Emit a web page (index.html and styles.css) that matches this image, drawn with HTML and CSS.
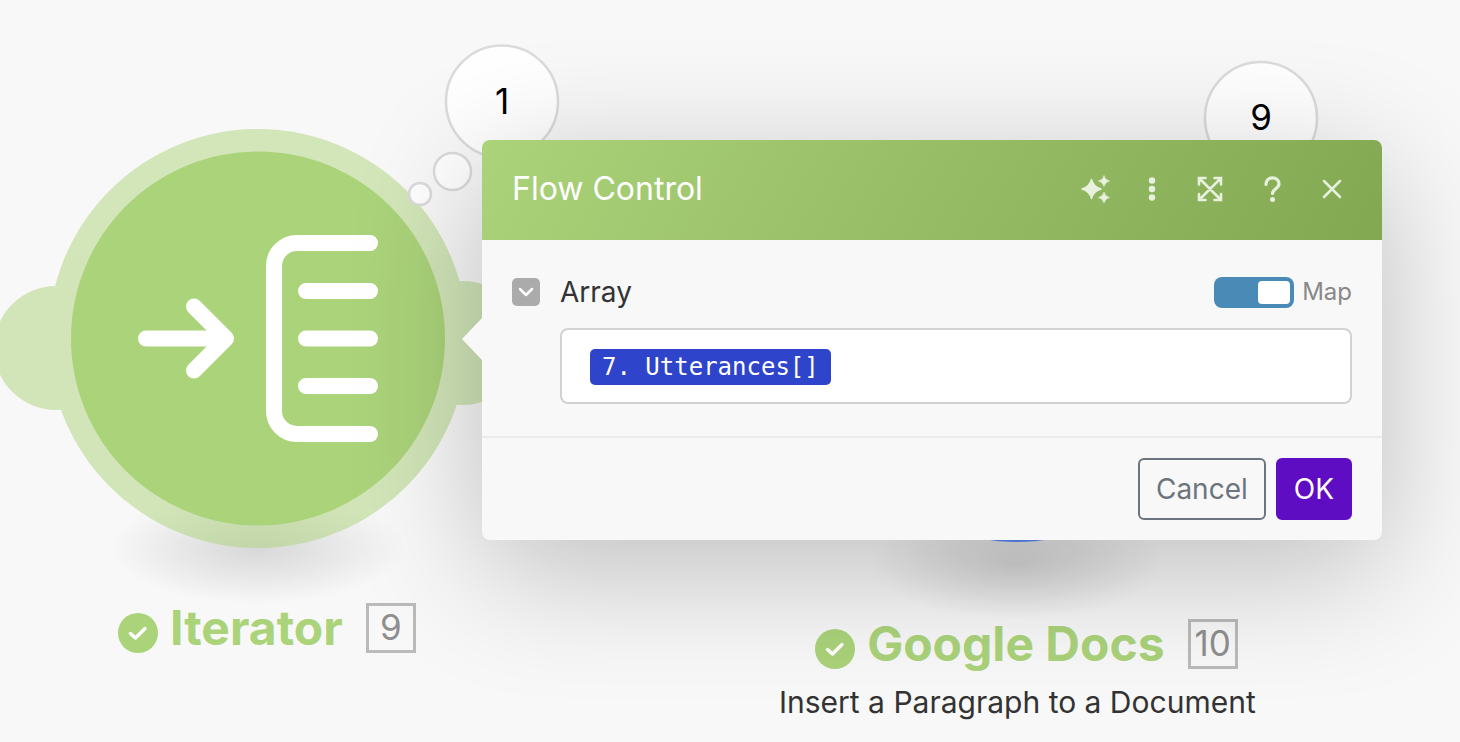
FILE: index.html
```html
<!DOCTYPE html>
<html lang="en">
<head>
<meta charset="utf-8">
<title>Flow Control</title>
<link rel="stylesheet" href="styles.css">
</head>
<body>
<main class="canvas">
  <svg class="art" width="1460" height="742" viewBox="0 0 1460 742" aria-hidden="true">
    <defs>
      <radialGradient id="ground">
        <stop offset="0" stop-color="#000" stop-opacity=".13"/>
        <stop offset=".5" stop-color="#000" stop-opacity=".07"/>
        <stop offset="1" stop-color="#000" stop-opacity="0"/>
      </radialGradient>
    </defs>
    <ellipse cx="258" cy="548" rx="148" ry="56" fill="url(#ground)"/>
    <g fill="#abd37a" opacity=".5">
      <circle cx="56" cy="348" r="62"/>
      <circle cx="463" cy="343" r="62"/>
      <circle cx="258" cy="338.500" r="209.500"/>
    </g>
    <circle cx="258" cy="338.500" r="187" fill="#abd37a"/>
    <g fill="none" stroke="#fff" stroke-width="16" stroke-linecap="round" stroke-linejoin="round">
      <path d="M146 338.500H226M194 306.500L226 338.500L194 370.500"/>
      <path d="M370 243H297a23 23 0 0 0-23 23V411a23 23 0 0 0 23 23H370"/>
      <path d="M306 291H370M306 338.500H370M306 386H370"/>
    </g>
    <ellipse cx="1017" cy="564" rx="148" ry="56" fill="url(#ground)"/>
    <circle cx="1017" cy="355" r="187" fill="#5a8bf5"/>
    <g fill="#fff" stroke="#dbdbdb" stroke-width="2.500">
      <circle cx="502" cy="101.500" r="56"/>
      <circle cx="452.500" cy="171.500" r="18.500"/>
      <circle cx="420" cy="194" r="11"/>
      <circle cx="1261" cy="118" r="56"/>
    </g>
  </svg>

  <span class="count count-iterator">1</span>
  <span class="count count-docs">9</span>

  <section class="node node-iterator">
    <div class="node-title">
      <svg class="check" viewBox="0 0 40 40" aria-hidden="true"><circle cx="20" cy="20" r="20"/><path d="M12.500 20.500L17.500 25L27 15.500"/></svg>
      <h2>Iterator</h2>
      <span class="badge">9</span>
    </div>
  </section>

  <section class="node node-docs">
    <div class="node-title">
      <svg class="check" viewBox="0 0 40 40" aria-hidden="true"><circle cx="20" cy="20" r="20"/><path d="M12.500 20.500L17.500 25L27 15.500"/></svg>
      <h2>Google Docs</h2>
      <span class="badge">10</span>
    </div>
    <p>Insert a Paragraph to a Document</p>
  </section>

  <form class="dialog" role="dialog" aria-labelledby="dialog-title">
    <header class="dialog-head">
      <h1 id="dialog-title">Flow Control</h1>
      <button type="button" class="tool" aria-label="Assistant">
        <svg viewBox="0 0 32 32"><g fill="currentColor"><path d="M15.500 6.500Q17.500 14 25 16Q17.500 18 15.500 25.500Q13.500 18 6 16Q13.500 14 15.500 6.500Z" stroke="currentColor" stroke-width="1.500" stroke-linejoin="round"/><path d="M28 2.500Q29 7 33.500 8Q29 9 28 13.500Q27 9 22.500 8Q27 7 28 2.500ZM28 19Q29 23.500 33.500 24.500Q29 25.500 28 30Q27 25.500 22.500 24.500Q27 23.500 28 19Z" stroke="currentColor" stroke-width=".6" stroke-linejoin="round"/></g></svg>
      </button>
      <button type="button" class="tool" aria-label="More">
        <svg viewBox="0 0 32 32"><g fill="currentColor"><circle cx="16" cy="7.500" r="3.200"/><circle cx="16" cy="16" r="3.200"/><circle cx="16" cy="24.500" r="3.200"/></g></svg>
      </button>
      <button type="button" class="tool" aria-label="Expand">
        <svg viewBox="0 0 32 32"><path d="M3 11.500V5H9.500M18.500 5H25V11.500M25 21V27H18.500M9.500 27H3V21M3.500 5.500L24.500 26.500M24.500 5.500L3.500 26.500" fill="none" stroke="currentColor" stroke-width="2.600" stroke-linecap="round" stroke-linejoin="miter"/></svg>
      </button>
      <button type="button" class="tool" aria-label="Help">
        <svg viewBox="0 0 32 32"><path d="M10 11.500C10 2.500 23 3 23 11C23 15.500 16.500 16 16.500 20.500" fill="none" stroke="currentColor" stroke-width="3.200" stroke-linecap="round"/><circle cx="16.500" cy="26.500" r="2.500" fill="currentColor"/></svg>
      </button>
      <button type="button" class="tool" aria-label="Close">
        <svg viewBox="0 0 32 32"><path d="M8 8L24 24M24 8L8 24" fill="none" stroke="currentColor" stroke-width="2.500" stroke-linecap="round"/></svg>
      </button>
    </header>
    <div class="dialog-body">
      <button type="button" class="collapse" aria-label="Collapse Array"><svg viewBox="0 0 28 28"><path d="M8 11L14 17L20 11"/></svg></button>
      <label class="field-name" for="array">Array</label>
      <label class="map"><input type="checkbox" class="switch" checked>Map</label>
      <div class="field">
        <span class="pill">7. Utterances[]</span>
        <input id="array" type="text">
      </div>
    </div>
    <footer class="dialog-foot">
      <button type="button" class="btn btn-cancel">Cancel</button>
      <button type="submit" class="btn btn-ok">OK</button>
    </footer>
  </form>
</main>
</body>
</html>
```

FILE: styles.css
```css
* {
  box-sizing: border-box;
}

body {
  margin: 0;
  background: #f8f8f8;
  color: #333;
  font-family: Inter, "Liberation Sans", sans-serif;
}

h1, h2, p {
  margin: 0;
}

button, input {
  font: inherit;
}

button {
  padding: 0;
  border: 0;
  cursor: pointer;
}

.canvas {
  position: relative;
  min-height: 100vh;
  overflow: hidden;
}

.art {
  position: absolute;
  top: 0;
  left: 0;
}

.count {
  position: absolute;
  width: 112px;
  color: #000;
  font-size: 35px;
  line-height: 44px;
  text-align: center;
}

.count-iterator {
  top: 79px;
  left: 446px;
}

.count-docs {
  top: 95px;
  left: 1205px;
}

.node {
  position: absolute;
}

.node-iterator {
  top: 598px;
  left: 118px;
}

.node-docs {
  top: 614px;
  left: 779px;
  display: flex;
  flex-direction: column;
  align-items: center;
}

.node-docs .node-title {
  padding-left: 18px;
}

.node-title {
  display: flex;
  align-items: center;
}

.check {
  width: 40px;
  height: 40px;
  margin: 10px 12px 0 0;
  fill: #abd37a;
}

.check path {
  fill: none;
  stroke: #fff;
  stroke-width: 3.5;
  stroke-linecap: round;
  stroke-linejoin: round;
}

.node h2 {
  color: #abd37a;
  font-size: 48px;
  font-weight: 700;
  line-height: 60px;
}

.badge {
  width: 50px;
  height: 50px;
  margin-left: 23px;
  border: 3px solid #bbb;
  color: #8f8f8f;
  font-size: 35px;
  line-height: 43px;
  text-align: center;
}

.node p {
  margin-top: 8px;
  font-size: 30px;
  line-height: 40px;
  white-space: nowrap;
}

.dialog {
  position: absolute;
  top: 140px;
  right: 78px;
  left: 482px;
  border-radius: 8px;
  background: #f8f8f8;
  box-shadow: 0 30px 130px rgba(0, 0, 0, .24);
}

.dialog::before {
  position: absolute;
  top: 178px;
  left: -20px;
  border: 21px solid transparent;
  border-right: 20px solid #f8f8f8;
  border-left: 0;
  content: "";
}

.dialog-head {
  display: flex;
  align-items: center;
  height: 100px;
  padding: 0 20px 3px 30px;
  border-radius: 8px 8px 0 0;
  background: linear-gradient(120deg, #abd37a, #82a852);
  color: #fff;
}

.dialog-head h1 {
  flex: 1;
  font-size: 32px;
  font-weight: 400;
}

.tool {
  display: grid;
  place-items: center;
  width: 60px;
  height: 60px;
  background: none;
  color: #e8f1dd;
}

.tool svg {
  width: 32px;
  height: 32px;
  overflow: visible;
}

.dialog-body {
  display: grid;
  grid-template-columns: 28px 1fr auto;
  align-items: center;
  gap: 20px;
  padding: 36px 30px 32px;
}

.collapse {
  width: 28px;
  height: 28px;
  border-radius: 5px;
  background: #ababab;
}

.collapse svg {
  display: block;
  fill: none;
  stroke: #fff;
  stroke-width: 2.5;
  stroke-linecap: round;
  stroke-linejoin: round;
}

.field-name {
  font-size: 28px;
  line-height: 32px;
}

.map {
  display: flex;
  align-items: center;
  gap: 8px;
  color: #888;
  font-size: 24px;
  line-height: 32px;
}

.switch {
  display: flex;
  justify-content: flex-end;
  width: 80px;
  height: 31px;
  margin: 0;
  padding: 4px;
  border-radius: 8px;
  background: #4a8ab7;
  appearance: none;
}

.switch::before {
  width: 32px;
  border-radius: 4px;
  background: #fff;
  content: "";
}

.field {
  display: flex;
  grid-column: 2 / -1;
  align-items: center;
  height: 76px;
  padding: 2px 28px 0;
  border: 2px solid #d2d2d2;
  border-radius: 8px;
  background: #fff;
}

.pill {
  padding: 0 12px;
  border-radius: 5px;
  background: #2e44ca;
  color: #fff;
  font-family: "DejaVu Sans Mono", monospace;
  font-size: 24px;
  line-height: 36px;
}

.field input {
  flex: 1;
  min-width: 0;
  border: 0;
  outline: 0;
  background: none;
}

.dialog-foot {
  display: flex;
  justify-content: flex-end;
  gap: 10px;
  padding: 20px 30px;
  border-top: 2px solid #ebebeb;
}

.btn {
  height: 62px;
  padding: 0 16px;
  border: 2px solid #6c757d;
  border-radius: 6px;
  background: none;
  color: #6c757d;
  font-size: 28px;
}

.btn-ok {
  border-color: #5f0dc3;
  background: #5f0dc3;
  color: #fff;
}
```
